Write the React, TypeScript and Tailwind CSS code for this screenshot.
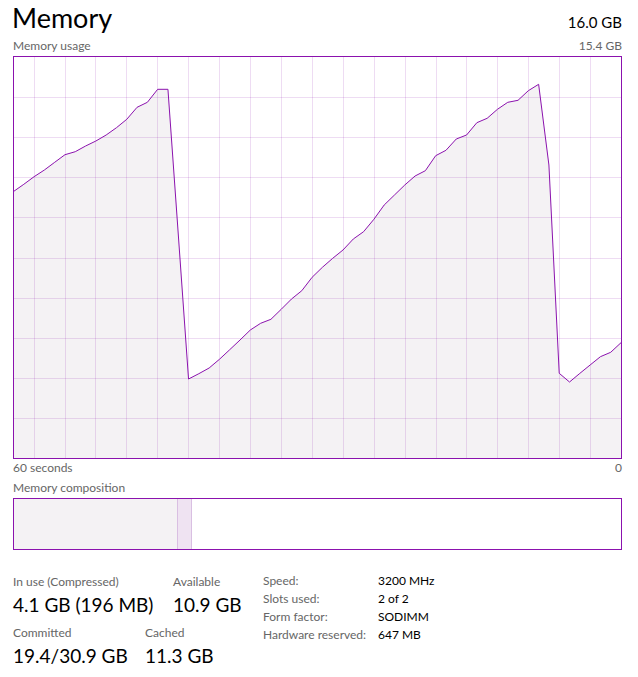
import React from "react";

const ys = [191.5,184.3,176.7,170,162.3,154.7,151.7,146,141,135,127.7,119.3,107.3,102.3,89.3,89.3,234,379,373.7,368,359.3,349.7,340,330,323.3,319.3,309.3,299,290.7,277.3,267.3,258.3,250,239,231.7,219.3,205,195,185,176,170.7,155.7,150.3,139,135,122.7,118.3,109.3,102.3,100.3,90.7,84.3,165,373.3,382,373.4,365,356.7,352.3,342.7];

const vx = [34,65,95,126,157,188,219,250,281,312,343,374,405,436,466,497,528,559,590];
const hy = [97,137,177,217,258,298,338,378,418];

function Chart() {
  const pts = ys.map((y, i) => [13.5 + i * (607.5 / 59), y] as [number, number]);
  const line = pts.map((p) => `${p[0].toFixed(2)},${p[1]}`).join(" ");
  const area = `13,459 ${line} 622,459`;
  return (
    <svg width={607} height={401} className="block">
      <g transform="translate(-14,-57)">
        <polygon points={area} fill="#f4f2f4" />
        {vx.map((x) => (
          <rect key={"v" + x} x={x} y={57} width={1} height={401} fill="rgba(139,18,174,0.15)" />
        ))}
        {hy.map((y) => (
          <rect key={"h" + y} x={14} y={y} width={607} height={1} fill="rgba(139,18,174,0.15)" />
        ))}
        <polyline points={line} fill="none" stroke="#8b12ae" strokeWidth={1} />
      </g>
    </svg>
  );
}

export default function App() {
  const font = { fontFamily: "Lato, 'Noto Sans', sans-serif" };
  return (
    <div className="w-[638px] h-[677px] bg-white pl-[13px] text-black" style={font}>
      <div className="w-[609px]">
        <div className="flex items-baseline justify-between h-[36px]">
          <span className="text-[27px] leading-[36px] -ml-[1px]">Memory</span>
          <span className="text-[15px]">16.0 GB</span>
        </div>
        <div className="flex justify-between items-center h-[20px] text-[12px] text-[#666666]">
          <span>Memory usage</span>
          <span>15.4 GB</span>
        </div>
        <div className="border border-[#8b12ae] h-[403px]">
          <Chart />
        </div>
        <div className="flex justify-between items-center h-[18px] text-[12px] text-[#666666]">
          <span>60 seconds</span>
          <span>0</span>
        </div>
        <div className="flex items-center h-[21px] text-[12px] text-[#666666]">
          <span>Memory composition</span>
        </div>
        <div className="border border-[#8b12ae] h-[52px] flex">
          <div className="w-[163px] bg-[#f4f2f4]" />
          <div className="w-[1px] bg-[#d9bfe2]" />
          <div className="w-[13px] bg-[#efe3f2]" />
          <div className="w-[1px] bg-[#d9bfe2]" />
          <div className="flex-1" />
        </div>
        <div className="flex items-start mt-[22px]">
          <div className="w-[250px]">
            <div className="flex">
              <div className="w-[160px]">
                <div className="text-[12px] leading-[19px] text-[#666666]">In use (Compressed)</div>
                <div className="text-[19px] leading-[27px]">4.1 GB (196 MB)</div>
              </div>
              <div>
                <div className="text-[12px] leading-[19px] text-[#666666]">Available</div>
                <div className="text-[19px] leading-[27px]">10.9 GB</div>
              </div>
            </div>
            <div className="flex mt-[5px]">
              <div className="w-[132px]">
                <div className="text-[12px] leading-[19px] text-[#666666]">Committed</div>
                <div className="text-[19px] leading-[27px]">19.4/30.9 GB</div>
              </div>
              <div>
                <div className="text-[12px] leading-[19px] text-[#666666]">Cached</div>
                <div className="text-[19px] leading-[27px]">11.3 GB</div>
              </div>
            </div>
          </div>
          <div className="grid grid-cols-[115px_auto] content-start text-[12px] leading-[18px]">
            <span className="text-[#666666]">Speed:</span>
            <span>3200 MHz</span>
            <span className="text-[#666666]">Slots used:</span>
            <span>2 of 2</span>
            <span className="text-[#666666]">Form factor:</span>
            <span>SODIMM</span>
            <span className="text-[#666666]">Hardware reserved:</span>
            <span>647 MB</span>
          </div>
        </div>
      </div>
    </div>
  );
}
